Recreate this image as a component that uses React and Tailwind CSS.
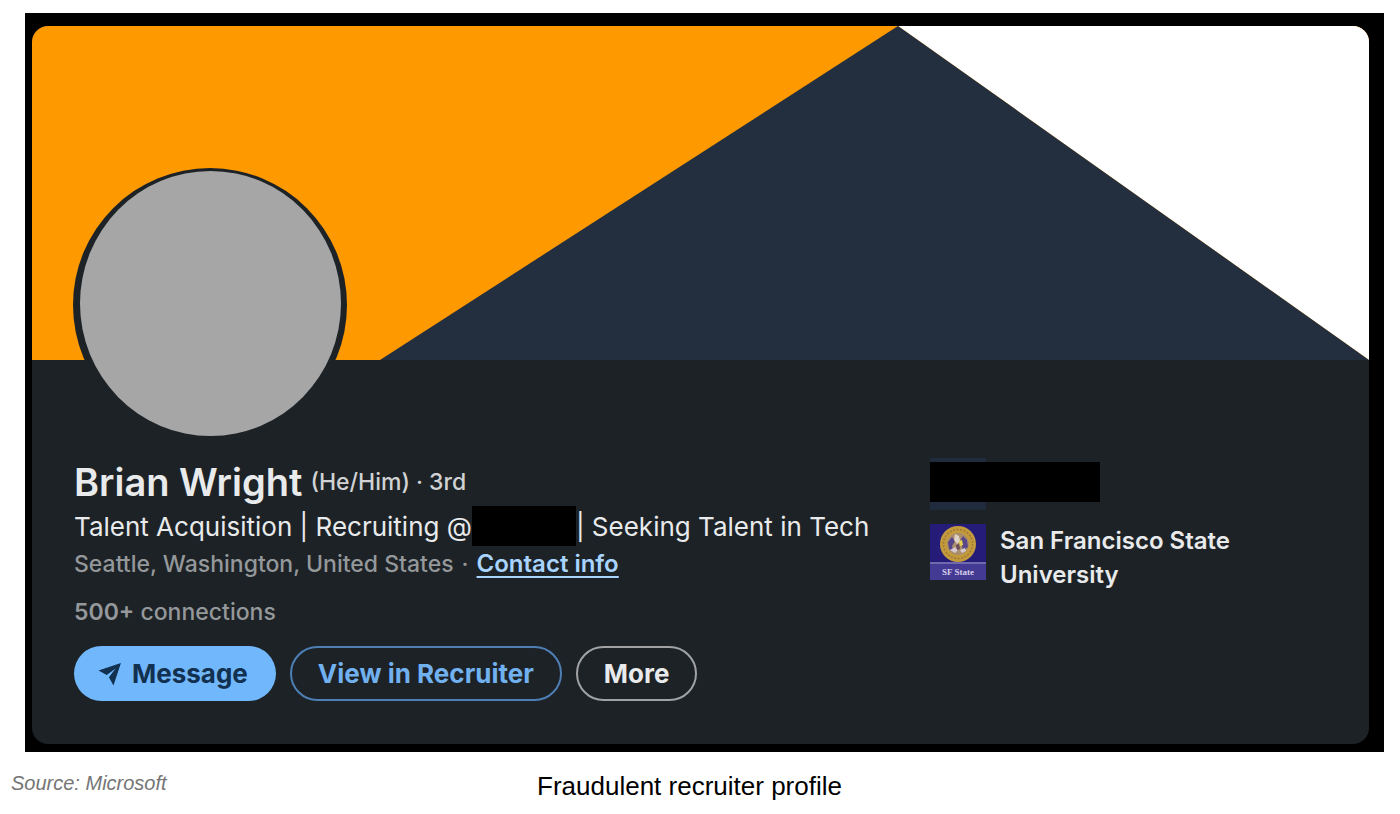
function Banner() {
  return (
    <svg viewBox="0 0 1337 334" preserveAspectRatio="none" className="block h-[334px] w-full" aria-hidden="true">
      <rect width="1337" height="334" fill="#ff9900" />
      <polygon points="866,0 1337,0 1337,334" fill="#ffffff" />
      <polygon points="866,0 1337,334 348,334" fill="#232f3e" />
    </svg>
  );
}

function Avatar() {
  return (
    <svg viewBox="0 0 274 274" className="relative -ml-px -mt-48 block size-[274px]" role="img" aria-label="Profile photo">
      <circle cx="137" cy="137" r="137" fill="#1d2226" />
      <ellipse cx="137.5" cy="135.5" rx="130.5" ry="132.5" fill="#a6a6a6" />
    </svg>
  );
}

function SchoolLogo() {
  return (
    <svg viewBox="0 0 56 56" className="size-14 shrink-0" aria-hidden="true">
      <rect width="56" height="56" fill="#241c78" />
      <rect y="38" width="56" height="18" fill="#453a93" />
      <rect y="38" width="56" height="2" fill="#7069ae" />
      <circle cx="28" cy="20" r="18" fill="#c39a3c" />
      <circle cx="28" cy="20" r="14.5" fill="none" stroke="#9d7a35" strokeWidth="1.5" strokeDasharray="2 1.5" />
      <circle cx="28" cy="20" r="11" fill="#a98d6c" />
      <path d="M18 18l4-5 3 4-3 5 2 6-5-3z" fill="#55438a" />
      <path d="M33 12l4 4 1 7-5 4-1-6-2-4z" fill="#5b4888" />
      <path d="M25 10l4 2 1 5-3 3-3-4z" fill="#ded3c4" />
      <path d="M20 26l5-3 3 3-3 3z" fill="#d8cbd0" />
      <path d="M30 26l5-2 1 3-4 2z" fill="#d8cbd0" />
      <path d="M26 21l3-1 1 5-3 1z" fill="#6a4a5a" />
      <path d="M29 17l3-1 1 5-3 1z" fill="#e8d34e" />
      <text x="28" y="51" textAnchor="middle" fontSize="9" fontWeight="700" fontFamily="Liberation Serif, serif" fill="#d5d0ea">
        SF State
      </text>
    </svg>
  );
}

function SendIcon() {
  return (
    <svg viewBox="-0.5 2 22.5 22.5" className="size-6 shrink-0" fill="#12304f" aria-hidden="true">
      <path d="M21 3L0 10l7.66 4.26L16 8l-6.26 8.34L14 24z" />
    </svg>
  );
}

export default function App() {
  return (
    <div className="bg-white pt-[13px] font-['Liberation_Sans',Arial,sans-serif]">
      <figure>
        <div className="ml-[25px] mr-4 bg-black pb-2 pl-[7px] pr-[15px] pt-[13px]">
          <article className="overflow-hidden rounded-2xl bg-[#1d2226] font-[Inter,sans-serif] text-[#e8eaeb]">
            <Banner />
            <div className="px-[42px] pb-[43px]">
              <Avatar />
              <div className="mt-4 grid grid-cols-[856fr_397fr]">
                <div>
                  <div className="flex items-center gap-2 whitespace-nowrap">
                    <h1 className="text-[38px] font-semibold leading-12">Brian Wright</h1>
                    <span className="text-[23px] font-medium text-[#d0d2d3]">(He/Him) · 3rd</span>
                  </div>
                  <p className="flex h-10 items-center whitespace-nowrap text-[26px]">
                    Talent Acquisition | Recruiting @
                    <span className="h-10 w-[104px] bg-black" />| Seeking Talent in Tech
                  </p>
                  <p className="flex items-baseline gap-2 whitespace-nowrap text-[23px] font-medium leading-9 text-[#94989b]">
                    <span>Seattle, Washington, United States</span>
                    <span>·</span>
                    <a href="#contact" className="text-2xl font-semibold leading-9 text-[#a8d4ff] underline underline-offset-4">
                      Contact info
                    </a>
                  </p>
                  <p className="mt-3 text-[23px] font-medium leading-9 text-[#94989b]">
                    <span className="font-semibold">500+</span> connections
                  </p>
                  <div className="mt-4 flex gap-[14px] whitespace-nowrap text-[26px] font-bold">
                    <button className="flex h-[55px] items-center gap-2.5 rounded-full bg-[#71b7fb] pl-6 pr-7 text-[#12304f]">
                      <SendIcon />
                      Message
                    </button>
                    <button className="h-[55px] rounded-full border-2 border-[#4d7fb5] px-[26px] text-[#71b1f0]">
                      View in Recruiter
                    </button>
                    <button className="h-[55px] rounded-full border-2 border-[#a0a2a4] px-[26px] text-[#e8eaeb]">
                      More
                    </button>
                  </div>
                </div>
                <ul>
                  <li className="flex h-[52px] w-[170px] items-start bg-[linear-gradient(#202b3d,#202b3d)] bg-[length:56px_100%] bg-no-repeat pt-1">
                    <span className="h-10 w-full bg-black" />
                  </li>
                  <li className="mt-[14px] flex gap-[14px]">
                    <SchoolLogo />
                    <span className="max-w-64 text-2xl font-semibold leading-[34px]">San Francisco State University</span>
                  </li>
                </ul>
              </div>
            </div>
          </article>
        </div>
        <figcaption className="grid grid-cols-[1fr_auto_1fr] items-start pl-[11px] pr-8 pt-[15px]">
          <cite className="text-xl leading-8 text-[#757575]">Source: Microsoft</cite>
          <span className="text-[26px] text-black">Fraudulent recruiter profile</span>
        </figcaption>
      </figure>
    </div>
  );
}
